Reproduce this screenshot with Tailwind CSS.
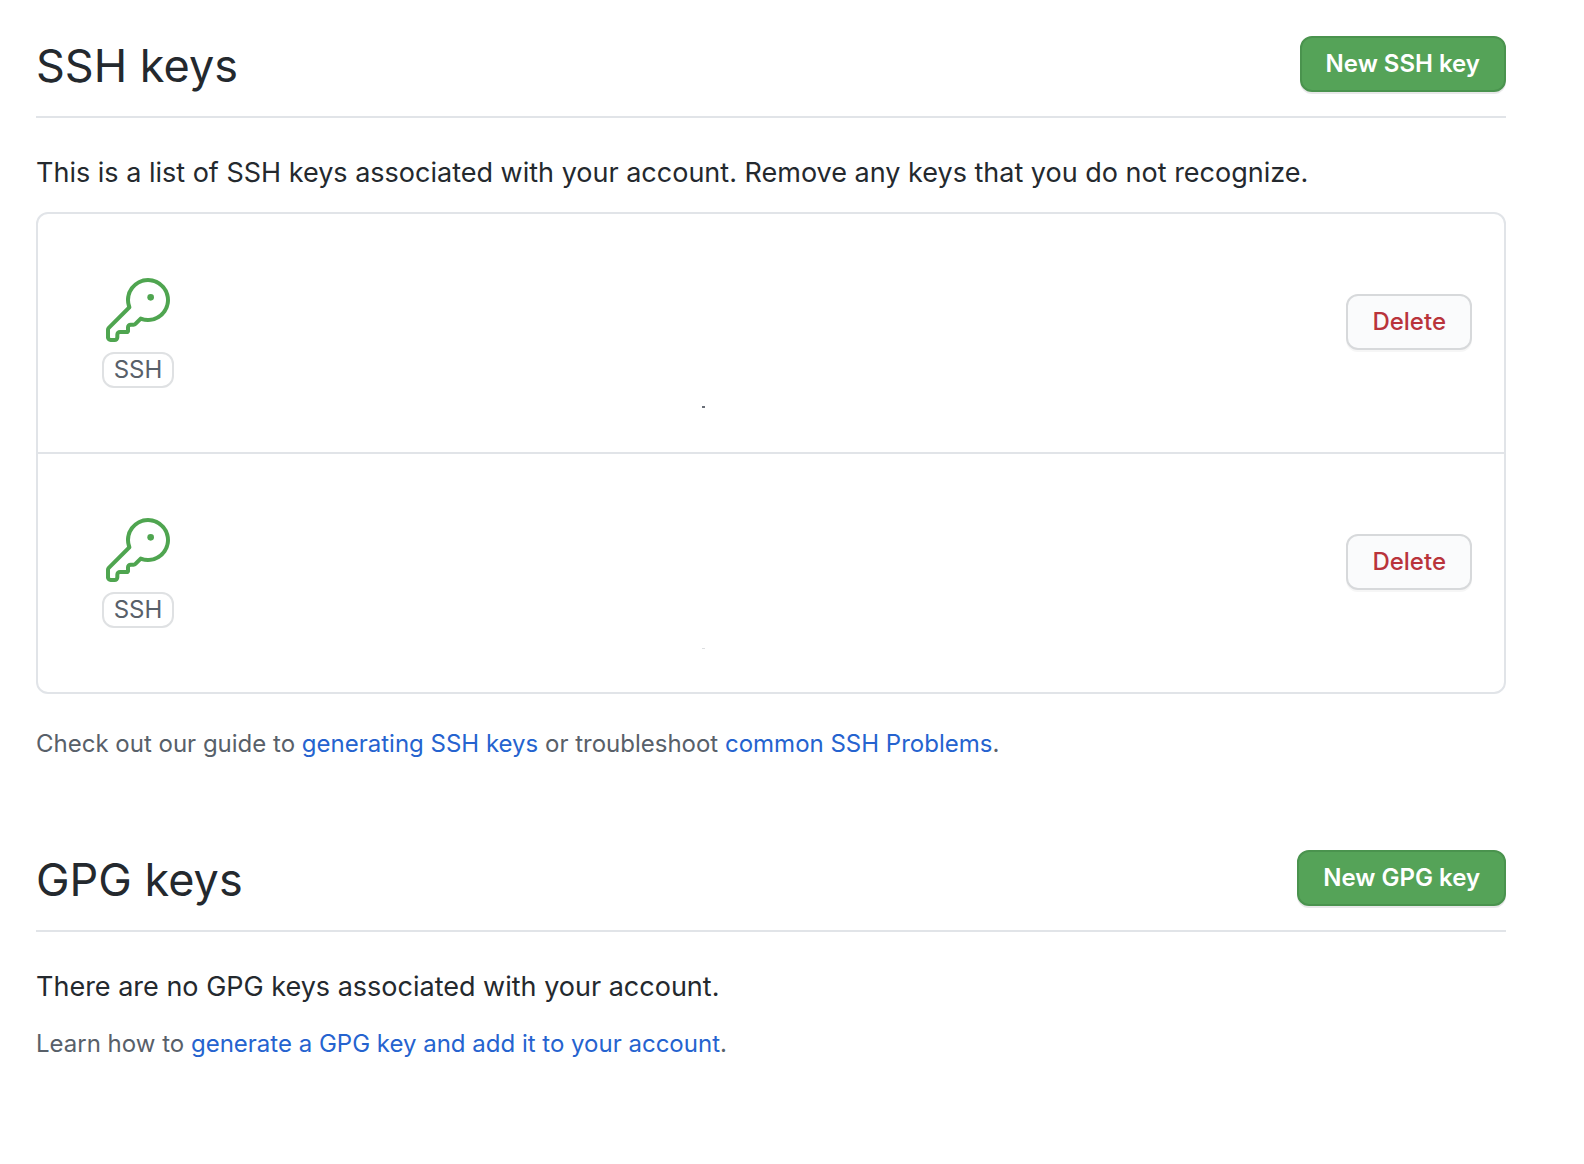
<!DOCTYPE html>
<html lang="en">
<head>
<meta charset="utf-8">
<title>SSH and GPG keys</title>
<script src="https://cdn.jsdelivr.net/npm/@tailwindcss/browser@4"></script>
</head>
<body class="bg-white font-[Inter,sans-serif] text-[27px] leading-[42px] text-[#24292e]">
<svg class="hidden" aria-hidden="true">
  <symbol id="key" viewBox="0 0 24 24">
    <path d="M16.75 8.5a1.25 1.25 0 100-2.5 1.25 1.25 0 000 2.5z"/>
    <path fill-rule="evenodd" d="M15.75 0a8.25 8.25 0 00-7.851 10.79L.513 18.178A1.75 1.75 0 000 19.414v2.836C0 23.217.784 24 1.75 24h1.5A1.75 1.75 0 005 22.25v-1a.25.25 0 01.25-.25h2.735a.75.75 0 00.545-.22l.214-.213A.875.875 0 009 19.948V18.5a.25.25 0 01.25-.25h1.086c.464 0 .91-.184 1.237-.513l1.636-1.636A8.25 8.25 0 1015.75 0zM9 8.25a6.75 6.75 0 114.288 6.287.75.75 0 00-.804.168l-1.971 1.972a.25.25 0 01-.177.073H9.25A1.75 1.75 0 007.5 18.5v1H5.25a1.75 1.75 0 00-1.75 1.75v1a.25.25 0 01-.25.25h-1.5a.25.25 0 01-.25-.25v-2.836a.25.25 0 01.073-.177l7.722-7.721a.75.75 0 00.168-.804A6.73 6.73 0 019 8.25z"/>
  </symbol>
</svg>
<main class="pt-9 pr-[78px] pb-16 pl-9">
  <section>
    <header class="flex items-start justify-between border-b-2 border-[#e1e4e8] pb-5">
      <h2 class="text-[45px] leading-[60px]">SSH keys</h2>
      <button type="button" class="h-14 rounded-xl border-2 border-[#4a934e] bg-[#55a358] px-6 text-[24px] leading-[40px] font-semibold text-white shadow-[0_2px_0_rgba(27,31,35,0.1)]">New SSH key</button>
    </header>
    <p class="mt-[34px]">This is a list of SSH keys associated with your account. Remove any keys that you do not recognize.</p>
    <ul class="mt-[18px] divide-y-2 divide-[#e1e4e8] rounded-xl border-2 border-[#e1e4e8]">
      <li class="relative flex items-start justify-between py-16 pr-8 pl-16">
        <div class="flex flex-col items-center">
          <svg class="size-16 fill-[#4fa550]" aria-hidden="true"><use href="#key"/></svg>
          <span class="mt-[10px] w-[72px] rounded-xl border-2 border-[#dfe1e3] text-center text-[24px] leading-[32px] text-[#586069]">SSH</span>
        </div>
        <span class="absolute top-48 left-[664px] h-[2px] w-[3px] bg-[#6a6f78]"></span>
        <button type="button" class="mt-4 h-14 rounded-xl border-2 border-[#d7d9db] bg-[#fafbfc] px-6 text-[24px] leading-[40px] font-medium text-[#b9343b] shadow-[0_2px_0_rgba(27,31,35,0.04)]">Delete</button>
      </li>
      <li class="relative flex items-start justify-between py-16 pr-8 pl-16">
        <div class="flex flex-col items-center">
          <svg class="size-16 fill-[#4fa550]" aria-hidden="true"><use href="#key"/></svg>
          <span class="mt-[10px] w-[72px] rounded-xl border-2 border-[#dfe1e3] text-center text-[24px] leading-[32px] text-[#586069]">SSH</span>
        </div>
        <span class="absolute top-[194px] left-[664px] h-px w-[3px] bg-[#dcdee0]"></span>
        <button type="button" class="mt-4 h-14 rounded-xl border-2 border-[#d7d9db] bg-[#fafbfc] px-6 text-[24px] leading-[40px] font-medium text-[#b9343b] shadow-[0_2px_0_rgba(27,31,35,0.04)]">Delete</button>
      </li>
    </ul>
    <p class="mt-8 text-[24px] leading-[36px] text-[#586069]">Check out our guide to <a href="#" class="text-[#2563cf]">generating SSH keys</a> or troubleshoot <a href="#" class="text-[#2563cf]">common SSH Problems</a>.</p>
  </section>
  <section class="mt-[88px]">
    <header class="flex items-start justify-between border-b-2 border-[#e1e4e8] pb-5">
      <h2 class="text-[45px] leading-[60px]">GPG keys</h2>
      <button type="button" class="h-14 rounded-xl border-2 border-[#4a934e] bg-[#55a358] px-6 text-[24px] leading-[40px] font-semibold text-white shadow-[0_2px_0_rgba(27,31,35,0.1)]">New GPG key</button>
    </header>
    <p class="mt-[34px]">There are no GPG keys associated with your account.</p>
    <p class="mt-[18px] text-[24px] leading-[36px] text-[#586069]">Learn how to <a href="#" class="text-[#2563cf]">generate a GPG key and add it to your account</a>.</p>
  </section>
</main>
</body>
</html>
